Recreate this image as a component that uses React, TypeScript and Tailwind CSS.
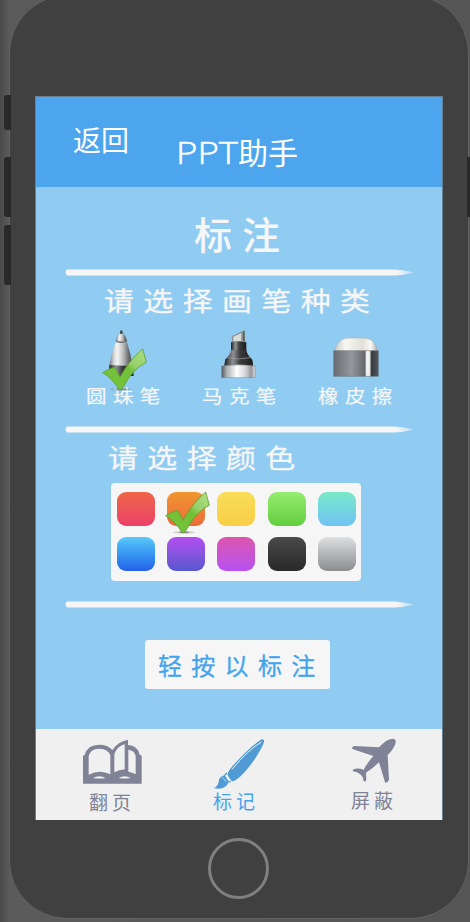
import React from "react";

const HAND = "font-['Noto_Sans_CJK_SC',sans-serif]";

function Divider() {
  return (
    <svg className="ml-[28px] block h-[7px] w-[351px] shrink-0" viewBox="0 0 351 7">
      <defs>
        <linearGradient id="stroke" x1="0" x2="1">
          <stop offset="0.95" stopColor="#f6f6f6" />
          <stop offset="1" stopColor="#f6f6f6" stopOpacity="0.4" />
        </linearGradient>
      </defs>
      <path d="M3 .5H330Q340 .8 350 3.5Q340 6.2 330 6.5H3Q0 3.5 3 .5Z" fill="url(#stroke)" />
    </svg>
  );
}

function Check() {
  return (
    <svg className="h-[43px] w-[45px]" viewBox="0 0 135 129">
      <defs>
        <linearGradient id="leaf" x1="1" y1="0" x2="0.3" y2="0.8">
          <stop offset="0" stopColor="#b0df84" />
          <stop offset="0.45" stopColor="#97d16c" />
          <stop offset="0.6" stopColor="#73bf38" />
          <stop offset="1" stopColor="#74c13a" />
        </linearGradient>
      </defs>
      <ellipse cx="57" cy="124" rx="34" ry="3.5" fill="#555" opacity=".25" />
      <ellipse cx="57" cy="124" rx="15" ry="3" fill="#444" opacity=".45" />
      <path d="M2 74Q18 64 36 58Q46 68 54 88Q80 38 122 3Q127 20 133 43Q94 60 63 118Q60 126 51 124Q30 90 2 74Z" fill="url(#leaf)" stroke="#5da12b" strokeWidth="2.5" strokeLinejoin="round" />
    </svg>
  );
}

function Metals() {
  return (
    <defs>
      <linearGradient id="steel">
        <stop offset="0" stopColor="#777" />
        <stop offset=".2" stopColor="#d8d8d8" />
        <stop offset=".35" stopColor="#f4f4f4" />
        <stop offset=".6" stopColor="#b9b9b9" />
        <stop offset=".85" stopColor="#626466" />
        <stop offset="1" stopColor="#55585a" />
      </linearGradient>
      <linearGradient id="black">
        <stop offset="0" stopColor="#222" />
        <stop offset=".3" stopColor="#909294" />
        <stop offset=".55" stopColor="#3b3b3c" />
        <stop offset="1" stopColor="#1e1e1f" />
      </linearGradient>
      <linearGradient id="chrome">
        <stop offset="0" stopColor="#55585c" />
        <stop offset=".15" stopColor="#aaaeb2" />
        <stop offset=".45" stopColor="#fff" />
        <stop offset=".7" stopColor="#d5d5d7" />
        <stop offset=".88" stopColor="#95989c" />
        <stop offset="1" stopColor="#e3e3e3" />
      </linearGradient>
      <linearGradient id="barrel">
        <stop offset="0" stopColor="#696c71" />
        <stop offset=".4" stopColor="#96989d" />
        <stop offset=".7" stopColor="#65676b" />
        <stop offset=".74" stopColor="#fafafa" />
        <stop offset=".81" stopColor="#e8e8e8" />
        <stop offset=".84" stopColor="#383a3d" />
        <stop offset="1" stopColor="#53565a" />
      </linearGradient>
      <linearGradient id="dome">
        <stop offset="0" stopColor="#c9c9c5" />
        <stop offset=".25" stopColor="#f7f7f4" />
        <stop offset=".65" stopColor="#e0dfd9" />
        <stop offset=".85" stopColor="#faf9f5" />
        <stop offset="1" stopColor="#aaa" />
      </linearGradient>
    </defs>
  );
}

function Ballpoint() {
  return (
    <svg className="h-[48px] w-[26px]" viewBox="0 0 78 144">
      <Metals />
      <path d="M36 8Q36 1 40 1Q44 1 44 8V12H36Z" fill="#3b3b3d" />
      <path d="M33 11H46Q55 20 57 34H24Q25 20 33 11Z" fill="url(#steel)" stroke="#777" />
      <path d="M24 33Q40 38 57 33V37Q40 42 23 37Z" fill="#6b6e71" />
      <path d="M23 37Q40 41 57 37Q68 70 74 106H4Q9 72 23 37Z" fill="url(#steel)" />
      <path d="M4 104Q40 110 74 104L77 138H2Z" fill="url(#black)" />
    </svg>
  );
}

function Marker() {
  return (
    <svg className="h-[48px] w-[35px]" viewBox="0 0 105 144">
      <path d="M34 19L70 2L71 37H34Z" fill="#9a9c9d" stroke="#555" />
      <path d="M37 20L60 10L60 33H37Z" fill="#d9dcd6" />
      <path d="M66 5L70 2L71 35L65 30Z" fill="#586052" />
      <path d="M30 37Q52 32 76 37V63H30Z" fill="url(#black)" />
      <path d="M30 60H76Q79 76 94 89V108H12V89Q27 76 30 60Z" fill="url(#black)" />
      <path d="M20 83Q53 91 87 83" fill="none" stroke="#a6a8aa" strokeWidth="2" />
      <path d="M15 89Q10 94 10 109H96Q96 94 92 89" fill="url(#black)" />
      <path d="M2 108Q52 101 103 108V143H2Z" fill="url(#chrome)" stroke="#777b80" strokeWidth="1.5" />
    </svg>
  );
}

function Eraser() {
  return (
    <svg className="h-[40px] w-[46px]" viewBox="0 0 138 120">
      <path d="M5 43Q12 5 46 3H94Q128 6 133 43Z" fill="url(#dome)" stroke="#a2a9a9" strokeWidth="1.5" />
      <path d="M2 41H136V118H2Z" fill="url(#barrel)" stroke="#62666b" strokeWidth="1.5" />
    </svg>
  );
}

function BookIcon() {
  return (
    <svg className="h-[45px] w-[60px]" viewBox="144 58 180 135" fill="none">
      <path d="M144 108L149 106Q157 75 193 75Q218 75 232 91Q247 66 279 60V76Q308 78 314 105L320 108V192H144Z" fill="#808295" />
      <path d="M161 110Q165 87 193 87Q219 88 226 107V164Q194 148 161 165Z" fill="#f0f0f0" />
      <path d="M238 104Q245 81 269 73V149Q252 151 238 158Z" fill="#f0f0f0" />
      <path d="M280 90Q299 92 302 110V164Q292 158 280 156Z" fill="#f0f0f0" />
      <path d="M174 175Q193 165 212 175Q193 178 174 175ZM251 175Q269 165 287 175Q269 178 251 175Z" fill="#f0f0f0" />
    </svg>
  );
}

function BrushIcon() {
  return (
    <svg className="h-[52px] w-[52px]" viewBox="0 0 156 156">
      <path d="M146 4Q154 2 153 12Q146 34 117 75Q77 128 57 130L43 114Q42 100 69 73Q117 22 146 4Z" fill="#509bd3" />
      <path d="M145 12Q105 36 57 94" stroke="#edf5fa" strokeWidth="3" fill="none" />
      <path d="M41 103L31 113L28 122L42 135L54 132Z" fill="#509bd3" />
      <path d="M42 107L36 113L47 130L53 128Z" fill="#f0f4f6" />
      <path d="M30 114Q18 118 17 131Q14 146 2 150Q28 157 43 140L45 134Z" fill="#509bd3" />
      <path d="M28 119Q36 123 39 132" stroke="#edf5fa" strokeWidth="2" fill="none" />
    </svg>
  );
}

function PlaneIcon() {
  return (
    <svg className="h-[46px] w-[46px]" viewBox="362 55 138 138" fill="#808398">
      <path d="M446 83Q468 58 487 57Q497 57 496 67Q494 85 472 106L476 180Q470 192 464 188L446 128Q426 148 407 159L408 180Q406 189 400 184Q398 170 390 164Q381 156 368 155Q364 149 375 147Q388 146 400 150Q412 128 429 109L368 89Q361 84 371 79Z" />
    </svg>
  );
}

function Prompt({ children }: { children: string }) {
  return <h2 className={`origin-left scale-x-[1.15] whitespace-nowrap text-[26px] leading-[30px] tracking-[8.2px] text-[#f6f6f6] [-webkit-text-stroke:0.3px_#f6f6f6] ${HAND}`}>{children}</h2>;
}

function ToolLabel({ children }: { children: string }) {
  return <span className={`ml-px origin-left scale-x-[1.14] whitespace-nowrap text-[18px] leading-[20px] tracking-[5.6px] text-[#f6f6f6] [-webkit-text-stroke:0.2px_#f6f6f6] ${HAND}`}>{children}</span>;
}

const swatches = [
  "from-[#ed6546] to-[#eb4067]",
  "from-[#f09630] to-[#eb6b39]",
  "from-[#f9dc57] to-[#f8cf46]",
  "from-[#96ed70] to-[#62cd3d]",
  "from-[#79e9c9] to-[#70c2f2]",
  "from-[#59c9f8] to-[#265ee8]",
  "from-[#b44cf1] to-[#5557ce]",
  "from-[#dd54ae] to-[#b74ff2]",
  "from-[#4a4a4a] to-[#292929]",
  "from-[#dedfe1] to-[#8c8d91]",
];

export default function App() {
  return (
    <div className="relative flex h-[922px] w-[470px] overflow-hidden bg-linear-to-r from-[#4a4a4a] via-[#5b5b5b] via-2% to-[#555]">
      <i className="absolute left-[4px] top-[95px] h-[35px] w-[7px] rounded-l-[3px] bg-[#292929]" />
      <i className="absolute left-[4px] top-[157px] h-[60px] w-[7px] rounded-l-[3px] bg-[#292929]" />
      <i className="absolute left-[4px] top-[225px] h-[60px] w-[7px] rounded-l-[3px] bg-[#292929]" />
      <main className="-mt-[5px] ml-[9px] flex h-[924px] w-[460px] shrink-0 flex-col rounded-[58px] border border-[#626262] bg-[#404040] pl-[25px] pt-[100px]">
        <div className="flex h-[724px] w-[408px] flex-col border border-b-0 border-[#667f91] bg-[#90ccf1]">
          <header className={`flex h-[90px] shrink-0 bg-[#4da5ed] text-white ${HAND}`}>
            <button className="ml-[37px] mt-[26px] h-[32px] w-[57px] whitespace-nowrap text-left text-[28px] leading-[32px]">返回</button>
            <h1 className="ml-[46px] mt-[38px] flex h-[32px] whitespace-nowrap text-[30px] leading-[32px]">
              <span className="w-[62px] origin-left scale-x-[1.18] font-['Open_Sans',sans-serif] text-[31px] font-light leading-[34px] [-webkit-text-stroke:0.5px_white]">PPT</span>
              <span>助手</span>
            </h1>
          </header>
          <section className="flex h-[542px] shrink-0 flex-col">
            <h2 className={`h-[82px] shrink-0 pl-[158px] pt-[24px] text-[38px] font-medium leading-[44px] tracking-[10px] text-[#f6f6f6] ${HAND}`}>标注</h2>
            <Divider />
            <div className="h-[54px] shrink-0 pl-[68px] pt-[9px]"><Prompt>请选择画笔种类</Prompt></div>
            <div className="flex h-[96px] shrink-0">
              <div className="relative ml-[49px] flex w-[116px] flex-col">
                <div className="h-[55px] pl-[23px]"><Ballpoint /></div>
                <ToolLabel>圆珠笔</ToolLabel>
                <div className="absolute left-[17px] top-[18px]"><Check /></div>
              </div>
              <div className="flex w-[116px] flex-col">
                <div className="h-[55px] pl-[20px]"><Marker /></div>
                <ToolLabel>马克笔</ToolLabel>
              </div>
              <div className="flex w-[100px] flex-col">
                <div className="h-[55px] pl-[16px] pt-[7px]"><Eraser /></div>
                <ToolLabel>橡皮擦</ToolLabel>
              </div>
            </div>
            <Divider />
            <div className="h-[50px] shrink-0 pl-[72px] pt-[9px]"><Prompt>请选择颜色</Prompt></div>
            <div className="relative ml-[75px] grid h-[98px] w-[250px] shrink-0 grid-cols-5 content-start gap-x-[12px] gap-y-[11px] rounded-[4px] bg-[#f6f6f6] pl-[6px] pr-[5px] pt-[9px]">
              {swatches.map((tone) => <button key={tone} className={`h-[34px] w-[38px] rounded-[9px] bg-linear-to-b ${tone}`} />)}
              <div className="absolute left-[54px] top-[8px]"><Check /></div>
            </div>
            <div className="h-[20px] shrink-0" />
            <Divider />
            <button className={`ml-[109px] mt-[32px] h-[49px] w-[185px] shrink-0 whitespace-nowrap rounded-[3px] bg-[#f6f6f6] pl-[13px] text-left text-[24px] leading-[44px] tracking-[9.3px] text-[#43a4ec] [-webkit-text-stroke:0.3px_#43a4ec] ${HAND}`}>轻按以标注</button>
          </section>
          <nav className={`flex flex-1 bg-[#f0f0f0] text-[19px] leading-[20px] tracking-[4px] text-[#808295] ${HAND}`}>
            <button className="ml-[47px] flex w-[130px] flex-col items-start pt-[10px]"><BookIcon /><span className="ml-[6px] mt-[8px]">翻页</span></button>
            <button className="flex w-[138px] flex-col items-start pt-[9px] text-[#43a4ec]"><BrushIcon /><span className="mt-[1px]">标记</span></button>
            <button className="flex flex-col items-start pt-[9px]"><PlaneIcon /><span className="mt-[6px]">屏蔽</span></button>
          </nav>
        </div>
        <div className="ml-[173px] mt-[18px] h-[61px] w-[61px] shrink-0 rounded-full border-[3px] border-[#808080]" />
      </main>
      <i className="absolute left-[467px] top-[157px] h-[60px] w-[3px] bg-[#292929]" />
    </div>
  );
}
